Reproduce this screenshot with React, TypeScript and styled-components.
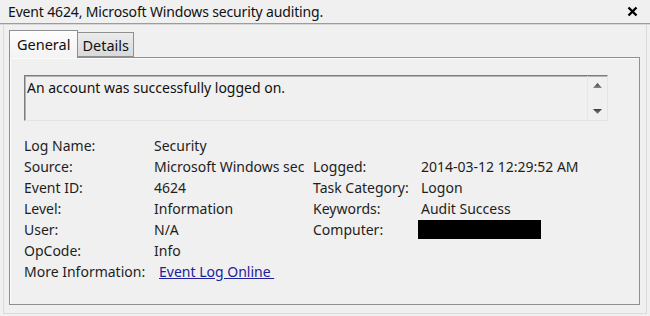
import * as React from "react";
import styled, { createGlobalStyle } from "styled-components";

const GlobalStyle = createGlobalStyle`
  html, body {
    margin: 0;
    padding: 0;
    background: #f0f0f0;
  }
  body {
    font-family: "Noto Sans", "DejaVu Sans", sans-serif;
    font-size: 14px;
    color: #1e1e1e;
  }
`;

const Window = styled.div`
  width: 650px;
  height: 316px;
  background: #f0f0f0;
  display: flex;
  flex-direction: column;
  overflow: hidden;
`;

const TitleBar = styled.div`
  height: 23px;
  display: flex;
  align-items: center;
  justify-content: space-between;
  padding: 0 12px 0 8px;
  border-bottom: 1px solid #9c9c9c;
  box-shadow: 0 1px 0 #d8d8d8;
  flex-shrink: 0;
`;

const Title = styled.span`
  font-size: 14px;
  letter-spacing: -0.15px;
  color: #111;
  white-space: nowrap;
`;

const CloseButton = styled.div`
  width: 12px;
  height: 12px;
  display: flex;
  align-items: center;
  justify-content: center;
`;

const Frame = styled.div`
  flex: 1;
  margin: 1px 3px 2px 3px;
  border: 1px solid #dadada;
  border-top: none;
  padding: 5px 6px 8px 5px;
  display: flex;
  flex-direction: column;
`;

const TabRow = styled.div`
  display: flex;
  align-items: flex-end;
  height: 27px;
  flex-shrink: 0;
`;

interface TabProps {
  $active?: boolean;
}

const Tab = styled.div<TabProps>`
  box-sizing: border-box;
  height: ${(p) => (p.$active ? "28px" : "25px")};
  margin-bottom: ${(p) => (p.$active ? "-1px" : "0")};
  padding: 0 ${(p) => (p.$active ? "7px" : "4px")};
  padding-bottom: ${(p) => (p.$active ? "2px" : "0")};
  display: flex;
  align-items: center;
  border: 1px solid #8e8f8f;
  border-bottom: ${(p) => (p.$active ? "none" : "1px solid #8e8f8f")};
  border-left: ${(p) => (p.$active ? "1px solid #8e8f8f" : "none")};
  background: ${(p) =>
    p.$active
      ? "linear-gradient(#fdfdfd, #f3f3f3)"
      : "linear-gradient(#ececec, #d9d9d9)"};
  position: relative;
  z-index: 1;
  font-size: 14.5px;
  color: #111;
  white-space: nowrap;
`;

const Panel = styled.div`
  flex: 1;
  border: 1px solid #8e8f8f;
  box-shadow: inset 1px 1px 0 #fcfcfc;
  background: #f0f0f0;
  padding: 17px 31px 0 14px;
  display: flex;
  flex-direction: column;
`;

const Description = styled.div`
  height: 44px;
  display: flex;
  border: 1px solid;
  border-color: #7c7c7c #e4e4e4 #e4e4e4 #7c7c7c;
  box-shadow: inset 1px 1px 0 #b4b4b4;
  background: #f0f0f0;
`;

const DescriptionText = styled.div`
  flex: 1;
  padding: 2px 0 0 2px;
  font-size: 14px;
  line-height: 20px;
  color: #111;
`;

const ScrollTrack = styled.div`
  width: 19px;
  display: flex;
  flex-direction: column;
  justify-content: space-between;
  align-items: center;
  padding: 7px 0 6px 0;
  border-left: 1px solid #e6e6e6;
`;

const Fields = styled.div`
  margin-top: 14px;
  display: grid;
  grid-template-columns: 130px 159px 108px 1fr;
  grid-auto-rows: 21px;
  align-items: center;
  font-size: 14px;
  color: #1e1e1e;
`;

const Label = styled.div`
  white-space: nowrap;
`;

const Value = styled.div`
  white-space: nowrap;
  overflow: hidden;
  max-width: 150px;
`;

const Link = styled.a`
  color: #21219b;
  text-decoration: underline;
  white-space: pre;
  margin-left: 5px;
`;

const Redacted = styled.div`
  width: 123px;
  height: 19px;
  margin-left: -3px;
  background: #000;
`;

const Arrow = ({ up }: { up?: boolean }) => (
  <svg width="9" height="5" viewBox="0 0 9 5">
    <defs>
      <linearGradient id={up ? "au" : "ad"} x1="0" y1="0" x2="0" y2="1">
        <stop offset="0" stopColor="#3a3a3a" />
        <stop offset="1" stopColor="#8a8a8a" />
      </linearGradient>
    </defs>
    <path
      d={up ? "M4.5 0 L9 5 L0 5 Z" : "M0 0 L9 0 L4.5 5 Z"}
      fill={`url(#${up ? "au" : "ad"})`}
    />
  </svg>
);

const CloseIcon = () => (
  <svg width="11" height="11" viewBox="0 0 11 11">
    <path d="M1.5 1.5 L9.5 9.5 M9.5 1.5 L1.5 9.5" stroke="#000" strokeWidth="2.4" />
  </svg>
);

interface Row {
  label: string;
  value: React.ReactNode;
  rightLabel?: string;
  rightValue?: React.ReactNode;
}

const rows: Row[] = [
  { label: "Log Name:", value: "Security" },
  {
    label: "Source:",
    value: "Microsoft Windows security auditing.",
    rightLabel: "Logged:",
    rightValue: "2014-03-12 12:29:52 AM",
  },
  { label: "Event ID:", value: "4624", rightLabel: "Task Category:", rightValue: "Logon" },
  { label: "Level:", value: "Information", rightLabel: "Keywords:", rightValue: "Audit Success" },
  { label: "User:", value: "N/A", rightLabel: "Computer:", rightValue: <Redacted /> },
  { label: "OpCode:", value: "Info" },
  {
    label: "More Information:",
    value: <Link href="#">Event Log Online </Link>,
  },
];

export default function App() {
  return (
    <>
      <GlobalStyle />
      <Window>
        <TitleBar>
          <Title>Event 4624, Microsoft Windows security auditing.</Title>
          <CloseButton>
            <CloseIcon />
          </CloseButton>
        </TitleBar>
        <Frame>
          <TabRow>
            <Tab $active>General</Tab>
            <Tab>Details</Tab>
          </TabRow>
          <Panel>
            <Description>
              <DescriptionText>An account was successfully logged on.</DescriptionText>
              <ScrollTrack>
                <Arrow up />
                <Arrow />
              </ScrollTrack>
            </Description>
            <Fields>
              {rows.map((r) => (
                <React.Fragment key={r.label}>
                  <Label>{r.label}</Label>
                  <Value>{r.value}</Value>
                  <Label>{r.rightLabel ?? ""}</Label>
                  <div>{r.rightValue ?? ""}</div>
                </React.Fragment>
              ))}
            </Fields>
          </Panel>
        </Frame>
      </Window>
    </>
  );
}
